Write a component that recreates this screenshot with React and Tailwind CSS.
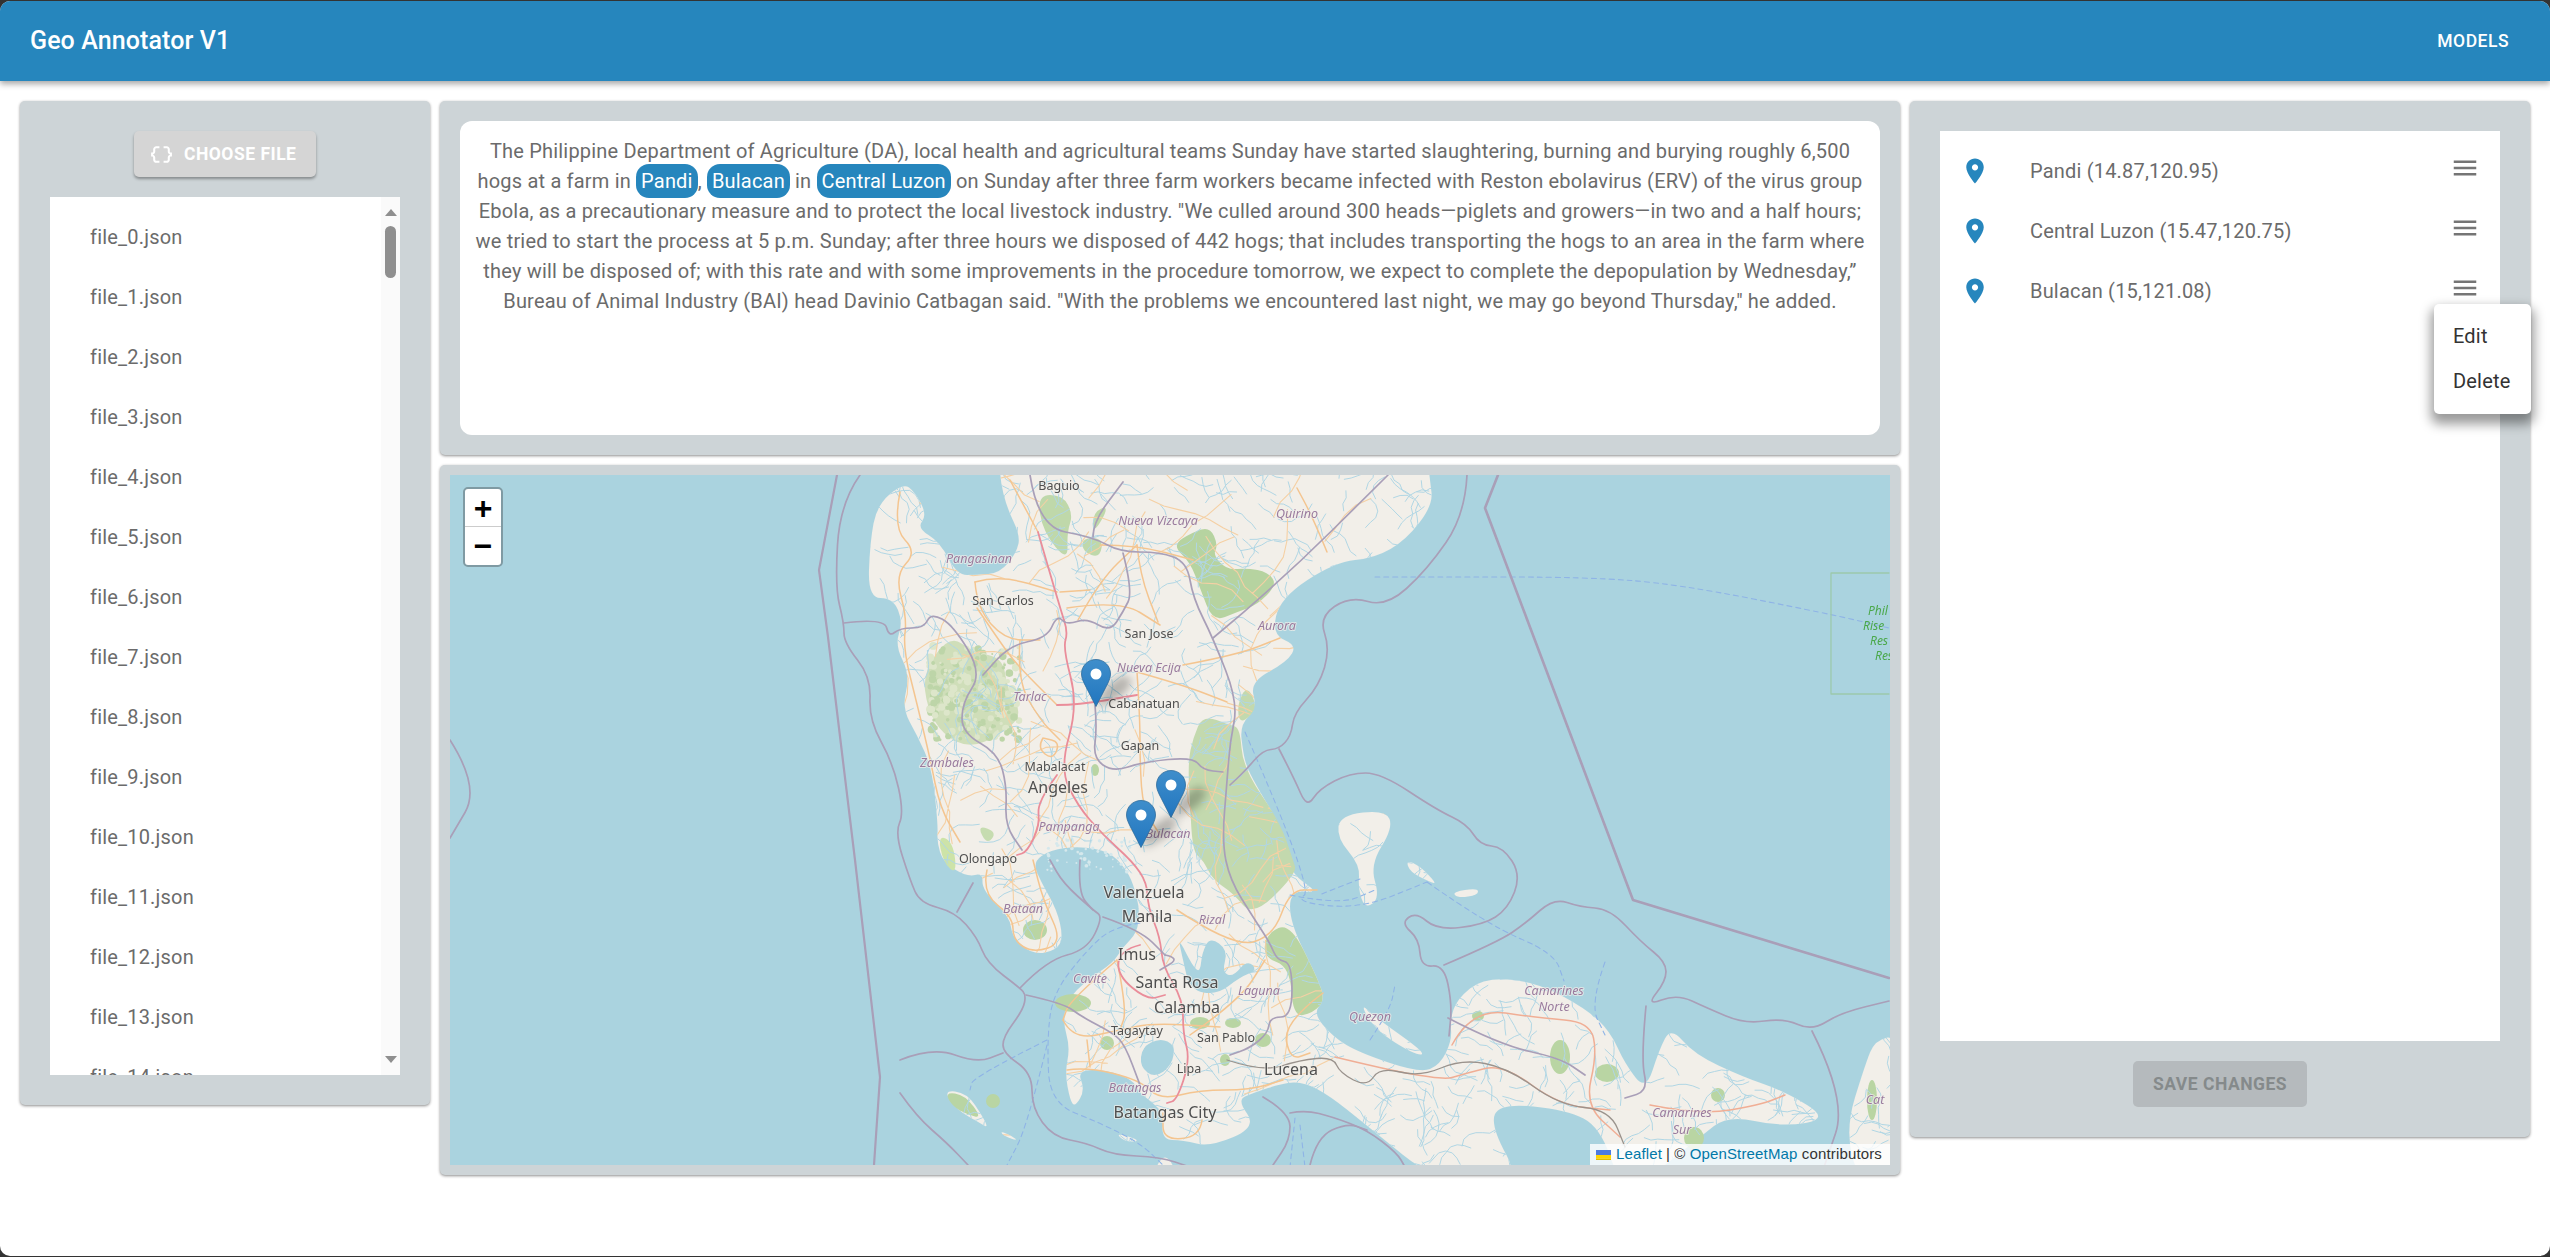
import { useMemo } from "react";

const FILES = Array.from({ length: 15 }, (_, i) => `file_${i}.json`);

const LOCATIONS = ["Pandi (14.87,120.95)", "Central Luzon (15.47,120.75)", "Bulacan (15,121.08)"];

const SEA = "#aad3df";
const LAND = "#f2efe9";
const BORDER = "#a99fb8";

const MAIN_LAND = [
  [1000, 455], [1427, 455], [1430, 480], [1433, 505], [1406, 540], [1375, 558], [1335, 562], [1280, 598], [1272, 635],
  [1297, 645], [1287, 662], [1250, 682], [1257, 708], [1240, 725], [1243, 752], [1247, 768], [1260, 792],
  [1280, 825], [1290, 865], [1296, 877], [1319, 893], [1290, 890], [1290, 923], [1317, 977], [1325, 1000],
  [1313, 1013], [1333, 1037], [1360, 1053], [1420, 1073], [1440, 1065], [1452, 1040], [1450, 1020], [1457, 999],
  [1483, 978], [1534, 981], [1585, 1008], [1610, 1031], [1625, 1064], [1646, 1091], [1659, 1050], [1671, 1027],
  [1694, 1054], [1743, 1077], [1784, 1091], [1830, 1119], [1781, 1127], [1728, 1115], [1700, 1137], [1640, 1185],
  [1620, 1185], [1600, 1127], [1567, 1110], [1500, 1103], [1490, 1125], [1523, 1185], [1440, 1185], [1365, 1124],
  [1330, 1096], [1304, 1082], [1283, 1083], [1253, 1093], [1237, 1100], [1257, 1127], [1210, 1147], [1183, 1140],
  [1162, 1140], [1163, 1113], [1153, 1103], [1140, 1093], [1133, 1080], [1107, 1070], [1077, 1070], [1085, 1090],
  [1075, 1107], [1070, 1100], [1065, 1073], [1070, 1047], [1063, 1023], [1067, 1000], [1087, 980], [1113, 963],
  [1123, 947], [1137, 933], [1140, 910], [1133, 883], [1125, 868], [1110, 852], [1080, 846], [1050, 850],
  [1033, 862], [1040, 880], [1057, 910], [1063, 937], [1057, 950], [1033, 955], [1012, 937], [1010, 917],
  [982, 890], [983, 873], [967, 877], [943, 862], [937, 842], [938, 825], [932, 768], [917, 735],
  [902, 708], [910, 675], [895, 645], [903, 622], [893, 598], [868, 598], [870, 542], [877, 505],
  [903, 483], [915, 492], [927, 515], [917, 528], [940, 542], [957, 575], [977, 575], [1000, 573],
  [1017, 552], [1020, 535], [1007, 508], [1000, 480],
];

const ISLANDS = [
  [[1340, 815], [1386, 810], [1393, 828], [1370, 865], [1380, 898], [1365, 909], [1358, 888], [1360, 865], [1337, 838]],
  [[1406, 860], [1420, 866], [1437, 884], [1430, 882], [1410, 872]],
  [[1452, 892], [1478, 888], [1478, 895], [1458, 898]],
  [[1360, 1003], [1375, 1017], [1427, 1054], [1415, 1055], [1375, 1030]],
  [[943, 1090], [967, 1093], [983, 1117], [988, 1128], [980, 1123], [957, 1110]],
  [[1900, 1035], [1875, 1040], [1865, 1065], [1845, 1130], [1860, 1185], [1900, 1185]],
  [[1150, 1180], [1165, 1150], [1180, 1180]],
  [[1116, 1134], [1128, 1136], [1140, 1141], [1126, 1142]],
  [[1000, 1131], [1012, 1136], [1018, 1141], [1004, 1136]],
];

const LAKES = [
  [[1178, 937], [1183, 960], [1190, 990], [1217, 995], [1240, 977], [1258, 970], [1247, 960], [1233, 977], [1222, 972], [1228, 950], [1210, 937], [1202, 953], [1200, 973], [1192, 965]],
  [[1140, 1067], [1142, 1047], [1160, 1038], [1175, 1045], [1172, 1065], [1155, 1078]],
];

const FORESTS = [
  { color: "#b6d3a0", pts: [[1172, 545], [1193, 532], [1210, 527], [1218, 545], [1213, 555], [1227, 570], [1247, 568], [1268, 572], [1277, 585], [1257, 605], [1237, 612], [1213, 622], [1200, 588], [1190, 562]] },
  { color: "#c3d9ae", pts: [[1203, 715], [1230, 725], [1240, 728], [1243, 768], [1280, 822], [1293, 860], [1297, 873], [1253, 917], [1233, 893], [1213, 880], [1203, 860], [1193, 852], [1190, 808], [1188, 762], [1193, 738]] },
  { color: "#c3d9ae", pts: [[1247, 685], [1258, 708], [1240, 725], [1237, 705]] },
  { color: "#b9d5a3", pts: [[1267, 933], [1290, 923], [1317, 977], [1325, 1000], [1313, 1013], [1293, 1017], [1290, 967], [1263, 957]] },
  { color: "#cfdeb9", pts: [[950, 635], [973, 652], [1003, 658], [1007, 688], [1023, 715], [1000, 735], [970, 748], [943, 735], [927, 708], [923, 672]] },
  { color: "#bfd8aa", pts: [[1037, 495], [1063, 495], [1073, 515], [1067, 532], [1068, 562], [1043, 532]] },
  { color: "#bfd8aa", pts: [[1082, 538], [1103, 538], [1100, 558], [1083, 552]] },
  { color: "#bfd8aa", pts: [[1093, 512], [1110, 505], [1093, 535]] },
  { color: "#cde3a8", pts: [[938, 835], [953, 842], [957, 875], [943, 862]] },
  { color: "#c6dcb0", pts: [[977, 825], [997, 832], [987, 845]] },
  { color: "#b9d5a3", pts: [[945, 1092], [965, 1095], [982, 1118], [968, 1115], [952, 1106]] },
];

const PARKS = [
  [1035, 930, 12, 10], [1073, 1003, 18, 9], [1107, 1043, 7, 7], [1200, 1023, 10, 6], [1263, 1040, 8, 7],
  [993, 1101, 7, 7], [1233, 1023, 8, 5], [1560, 1057, 10, 17], [1607, 1073, 12, 9], [1718, 1095, 7, 7],
  [1694, 1138, 10, 11], [1225, 1060, 5, 6], [1478, 1016, 6, 5], [1095, 770, 4, 6], [1872, 1100, 5, 20],
];

// province and sea borders
const BORDERS = [
  [[450, 740], [480, 787], [450, 838]],
  [[860, 475], [840, 503], [835, 587], [844, 623], [844, 643], [871, 677], [869, 720], [893, 763], [904, 813], [895, 833], [910, 880], [920, 903], [955, 912], [977, 937], [987, 963], [1020, 988], [1026, 995], [1023, 1010], [1003, 1037], [1003, 1053], [1032, 1073], [1032, 1108], [1053, 1137], [1087, 1143], [1113, 1155], [1160, 1157], [1190, 1167]],
  [[1026, 995], [1063, 1003], [1082, 1017], [1113, 1033], [1125, 1045], [1140, 1085]],
  [[844, 623], [884, 618], [889, 637], [900, 628], [924, 628], [931, 613], [953, 625], [982, 673], [962, 703], [962, 733], [998, 753], [1007, 787], [1005, 825], [1022, 850]],
  [[1030, 475], [1038, 527], [1093, 537], [1120, 552], [1160, 552], [1187, 562], [1193, 598], [1213, 638], [1238, 702], [1230, 742], [1227, 782], [1222, 842], [1230, 880], [1253, 917], [1270, 943], [1277, 960], [1292, 963], [1292, 1017], [1270, 1017], [1268, 1033], [1250, 1048], [1230, 1055]],
  [[1213, 638], [1277, 585], [1388, 475]],
  [[1123, 553], [1133, 592], [1123, 612], [1110, 632], [1087, 618], [1067, 625], [1057, 615], [1047, 638], [1010, 645], [983, 675]],
  [[1095, 705], [1097, 728], [1093, 758], [1113, 772], [1143, 762], [1193, 757], [1203, 770], [1223, 772]],
  [[1093, 537], [1093, 522], [1123, 482]],
  [[1467, 475], [1465, 515], [1427, 570], [1386, 607], [1350, 596], [1319, 617], [1330, 649], [1319, 686], [1294, 713], [1291, 736], [1279, 749], [1263, 750], [1245, 771], [1230, 785]],
  [[1279, 749], [1294, 778], [1307, 808], [1319, 789], [1350, 773], [1381, 773], [1437, 810], [1467, 824], [1480, 845], [1503, 847], [1521, 875], [1508, 909], [1483, 925], [1437, 930], [1416, 912], [1401, 923], [1419, 939], [1421, 967], [1444, 965], [1452, 1004], [1449, 1036]],
  [[1444, 965], [1498, 942], [1526, 923], [1554, 898], [1580, 907], [1610, 909], [1641, 942], [1666, 962], [1666, 981], [1646, 1006], [1677, 994], [1707, 1008], [1745, 1024], [1784, 1018], [1812, 1031], [1840, 1013], [1889, 1001]],
  [[1646, 1006], [1641, 1059], [1648, 1091], [1625, 1098]],
  [[1812, 1031], [1847, 1100], [1824, 1167]],
  [[1263, 1097], [1290, 1113], [1290, 1140], [1273, 1165]],
  [[1290, 1113], [1305, 1110], [1333, 1117], [1367, 1130], [1397, 1153], [1405, 1167]],
  [[1310, 1165], [1317, 1137], [1347, 1123], [1367, 1130]],
  [[900, 1060], [933, 1047], [977, 1063], [1003, 1053]],
  [[900, 1093], [917, 1117], [947, 1143], [968, 1165]],
  [[957, 912], [973, 883]],
  [[1020, 988], [1047, 960], [1087, 950], [1103, 917], [1093, 910], [1063, 883], [1050, 860]],
  [[1080, 860], [1078, 893], [1093, 910]],
  [[1103, 917], [1140, 930], [1165, 955]],
  [[1165, 955], [1180, 958], [1160, 970]],
  [[1448, 1018], [1500, 1045], [1560, 1058], [1585, 1075]],
];

const FERRY_LINES = [
  [[1375, 577], [1432, 577], [1585, 577], [1677, 584], [1830, 614], [1889, 628]],
  [[1245, 732], [1314, 889], [1294, 902], [1360, 909], [1427, 882]],
  [[1360, 879], [1319, 895]],
  [[1427, 882], [1488, 925], [1554, 953], [1564, 981]],
  [[1605, 962], [1590, 1004], [1605, 1035]],
  [[1140, 923], [1113, 927], [1087, 950], [1053, 993], [1047, 1040], [1050, 1103], [1100, 1123], [1140, 1143], [1163, 1165]],
  [[1047, 1040], [973, 1077], [970, 1090]],
  [[1047, 1045], [1027, 1127], [1007, 1165]],
  [[1290, 895], [1340, 905], [1375, 890]],
  [[1300, 1125], [1305, 1167]],
  [[1295, 1118], [1290, 1167]],
  [[1370, 1040], [1390, 1010], [1395, 985]],
];

const PINK_ROADS = [
  [[1038, 532], [1060, 608], [1068, 632], [1063, 648], [1078, 705], [1060, 768], [1077, 805], [1103, 835], [1133, 862], [1147, 883], [1148, 907], [1160, 937], [1163, 967], [1183, 1000], [1183, 1033], [1190, 1060], [1177, 1100], [1167, 1103]],
  [[1057, 705], [1078, 705], [1137, 695]],
  [[1057, 775], [1037, 802], [1040, 825], [1027, 852], [1017, 855]],
  [[1140, 945], [1120, 950], [1117, 975], [1147, 1000], [1165, 995]],
];

const ORANGE_ROADS = [
  [[900, 492], [893, 528], [917, 552], [895, 575], [907, 618], [903, 648], [918, 708], [930, 758], [940, 808], [960, 842]],
  [[975, 582], [1000, 575], [1057, 592]],
  [[977, 608], [1000, 642], [1017, 665], [1057, 705]],
  [[975, 582], [977, 608], [1005, 640], [1040, 640]],
  [[1067, 608], [1120, 600], [1160, 625]],
  [[1137, 545], [1140, 575], [1158, 622]],
  [[1137, 672], [1140, 718], [1140, 765], [1143, 808], [1160, 835]],
  [[1183, 665], [1237, 655], [1280, 638]],
  [[1137, 672], [1183, 685], [1227, 702]],
  [[1327, 552], [1313, 518], [1297, 488]],
  [[1100, 545], [1137, 545], [1193, 560]],
  [[1043, 738], [1037, 748], [1053, 760], [1060, 742], [1043, 738]],
  [[987, 870], [982, 893], [1013, 917], [1013, 940], [1033, 953], [1063, 943], [1043, 900], [1033, 860]],
  [[1177, 910], [1233, 947], [1273, 937], [1290, 890], [1317, 890]],
  [[1323, 993], [1283, 1023], [1290, 1060], [1310, 1053]],
  [[1067, 1070], [1087, 1067], [1140, 1080], [1160, 1100], [1200, 1090], [1250, 1090], [1283, 1080]],
  [[1063, 1020], [1073, 1040], [1120, 1030], [1153, 1023], [1220, 1027]],
  [[1117, 960], [1127, 1010], [1120, 1030]],
  [[1087, 1040], [1090, 1067]],
  [[1202, 1120], [1200, 1137], [1163, 1140], [1163, 1113]],
  [[1117, 960], [1070, 1000], [1063, 1020]],
  [[1190, 1035], [1240, 1000], [1265, 960]],
  [[1038, 532], [1010, 480]],
  [[1078, 620], [1100, 580], [1137, 545]],
  [[1020, 640], [1017, 680], [1040, 720], [1060, 740]],
  [[1090, 590], [1060, 592]],
];

const SALMON_ROADS = [
  [[1452, 1045], [1472, 1008], [1539, 1018], [1590, 1022], [1597, 1054], [1585, 1105], [1620, 1137]],
  [[1335, 1057], [1437, 1082], [1467, 1073], [1503, 1064], [1559, 1105], [1610, 1110]],
  [[1650, 1105], [1700, 1115], [1760, 1105], [1785, 1095]],
];

const RAIL = [
  [1227, 1060], [1263, 1072], [1300, 1060], [1333, 1057], [1340, 1073], [1367, 1087], [1380, 1067], [1420, 1077], [1462, 1059], [1508, 1068], [1559, 1105], [1610, 1110], [1625, 1147],
];

const CITY_LABELS = [
  ["Baguio", 1059, 490, 12.5], ["San Carlos", 1003, 605, 12.5], ["San Jose", 1149, 638, 12.5], ["Cabanatuan", 1144, 708, 12.5],
  ["Gapan", 1140, 750, 12.5], ["Mabalacat", 1055, 771, 12.5], ["Angeles", 1058, 793, 16], ["Olongapo", 988, 863, 12.5],
  ["Valenzuela", 1144, 898, 16], ["Manila", 1147, 922, 16], ["Imus", 1137, 960, 16], ["Santa Rosa", 1177, 988, 16],
  ["Calamba", 1187, 1013, 16], ["Tagaytay", 1137, 1035, 12.5], ["San Pablo", 1226, 1042, 12.5], ["Lipa", 1189, 1073, 12.5],
  ["Lucena", 1291, 1075, 16], ["Batangas City", 1165, 1118, 16],
];

const REGION_LABELS = [
  ["Pangasinan", 979, 563], ["Nueva Vizcaya", 1158, 525], ["Quirino", 1297, 518], ["Aurora", 1277, 630],
  ["Nueva Ecija", 1149, 672], ["Tarlac", 1030, 701], ["Zambales", 947, 767], ["Pampanga", 1069, 831],
  ["Bulacan", 1168, 838], ["Bataan", 1023, 913], ["Rizal", 1212, 924], ["Cavite", 1090, 983],
  ["Laguna", 1259, 995], ["Batangas", 1135, 1092], ["Quezon", 1370, 1021], ["Camarines", 1554, 995],
  ["Norte", 1554, 1011], ["Camarines", 1682, 1117], ["Sur", 1682, 1134], ["Cat", 1875, 1104],
];

const RESERVE_LABELS = [
  ["Phil", 1868, 615], ["Rise", 1863, 630], ["Res", 1870, 645], ["Res", 1875, 660],
];

// rounded line through the traced points
function smooth(pts, closed = false) {
  if (closed) {
    const mid = (a, b) => [(a[0] + b[0]) / 2, (a[1] + b[1]) / 2];
    const start = mid(pts[pts.length - 1], pts[0]);
    let d = `M${start[0]} ${start[1]}`;
    pts.forEach((p, i) => {
      const m = mid(p, pts[(i + 1) % pts.length]);
      d += `Q${p[0]} ${p[1]} ${m[0]} ${m[1]}`;
    });
    return d + "Z";
  }
  let d = `M${pts[0][0]} ${pts[0][1]}`;
  for (let i = 1; i < pts.length - 1; i++) {
    const mx = (pts[i][0] + pts[i + 1][0]) / 2;
    const my = (pts[i][1] + pts[i + 1][1]) / 2;
    d += `Q${pts[i][0]} ${pts[i][1]} ${mx} ${my}`;
  }
  const last = pts[pts.length - 1];
  return d + `L${last[0]} ${last[1]}`;
}

// wandering strokes for streams and minor roads, seeded so the picture stays the same
function scatter({ seed, count, x0, x1, y0, y1, step, bend, minSteps, maxSteps }) {
  let s = seed;
  const rnd = () => {
    s = (s * 1664525 + 1013904223) % 4294967296;
    return s / 4294967296;
  };
  let d = "";
  for (let i = 0; i < count; i++) {
    let x = x0 + rnd() * (x1 - x0);
    let y = y0 + rnd() * (y1 - y0);
    let a = rnd() * Math.PI * 2;
    d += `M${x.toFixed(1)} ${y.toFixed(1)}`;
    const steps = minSteps + Math.floor(rnd() * (maxSteps - minSteps + 1));
    for (let k = 0; k < steps; k++) {
      a += (rnd() - 0.5) * bend;
      x += Math.cos(a) * step;
      y += Math.sin(a) * step;
      d += `L${x.toFixed(1)} ${y.toFixed(1)}`;
    }
  }
  return d;
}

// blotches that break up the flat forest areas
function blotches(seed, count, x0, x1, y0, y1) {
  let s = seed;
  const rnd = () => {
    s = (s * 1664525 + 1013904223) % 4294967296;
    return s / 4294967296;
  };
  return Array.from({ length: count }, () => ({
    cx: x0 + rnd() * (x1 - x0),
    cy: y0 + rnd() * (y1 - y0),
    r: 1 + rnd() * 3,
  }));
}

function BaseMap() {
  const rivers = useMemo(() => scatter({ seed: 41, count: 2000, x0: 860, x1: 1890, y0: 475, y1: 1165, step: 7, bend: 1.3, minSteps: 3, maxSteps: 6 }), []);
  const lanes = useMemo(() => scatter({ seed: 7, count: 110, x0: 890, x1: 1340, y0: 480, y1: 1130, step: 16, bend: 0.9, minSteps: 3, maxSteps: 6 }), []);
  const mottled = useMemo(() => blotches(11, 260, 928, 1020, 645, 740), []);
  const marsh = useMemo(() => blotches(23, 70, 1045, 1130, 838, 872), []);
  const landPath = smooth(MAIN_LAND, true);
  const islandPaths = ISLANDS.map((pts) => smooth(pts, true));

  return (
    <svg viewBox="450 475 1440 690" className="block w-full h-full" fill="none" strokeLinejoin="round" strokeLinecap="round">
      <defs>
        <filter id="tile" x="0" y="0" width="100%" height="100%">
          <feGaussianBlur stdDeviation="0.5" />
        </filter>
        <filter id="tileText" x="-5%" y="-20%" width="110%" height="140%">
          <feGaussianBlur stdDeviation="0.3" />
        </filter>
        <clipPath id="landClip">
          <path d={landPath} />
          {islandPaths.map((d, i) => (
            <path key={i} d={d} />
          ))}
        </clipPath>
      </defs>
      <rect x="450" y="475" width="1440" height="690" fill={SEA} />
      <g filter="url(#tile)">
        <path d={landPath} fill={LAND} />
        {islandPaths.map((d, i) => (
          <path key={i} d={d} fill={LAND} />
        ))}
        {marsh.map((b, i) => (
          <circle key={i} cx={b.cx} cy={b.cy} r={b.r * 0.5} fill="#d5e8ec" />
        ))}
        {FORESTS.map((f, i) => (
          <path key={i} d={smooth(f.pts, true)} fill={f.color} />
        ))}
        {mottled.map((b, i) => (
          <circle key={i} cx={b.cx} cy={b.cy} r={b.r} fill={i % 2 ? "#bdd5a8" : "#dde6ca"} />
        ))}
        {PARKS.map(([cx, cy, rx, ry], i) => (
          <ellipse key={i} cx={cx} cy={cy} rx={rx} ry={ry} fill="#b9d5a3" />
        ))}
        <g clipPath="url(#landClip)">
          <path d={rivers} stroke="#b0d6e4" strokeWidth="1" />
          <path d={lanes} stroke="#f5d0a4" strokeWidth="1.1" />
        </g>
        {LAKES.map((pts, i) => (
          <path key={i} d={smooth(pts, true)} fill={SEA} />
        ))}
        {ORANGE_ROADS.map((pts, i) => (
          <path key={i} d={smooth(pts)} stroke="#f4c590" strokeWidth="1.5" />
        ))}
        {SALMON_ROADS.map((pts, i) => (
          <path key={i} d={smooth(pts)} stroke="#f0ae95" strokeWidth="1.5" />
        ))}
        {PINK_ROADS.map((pts, i) => (
          <path key={i} d={smooth(pts)} stroke="#ea8d9a" strokeWidth="1.8" />
        ))}
        <path d={smooth(RAIL)} stroke="#9a938d" strokeWidth="1.3" />
        {FERRY_LINES.map((pts, i) => (
          <path key={i} d={smooth(pts)} stroke="#8fb4e6" strokeWidth="1.1" strokeDasharray="5 4" />
        ))}
        {BORDERS.map((pts, i) => (
          <path key={i} d={smooth(pts)} stroke={BORDER} strokeWidth="1.7" />
        ))}
        <path d="M837 475 819 570 828 637 842 753 855 860 880 1077 874 1165" stroke={BORDER} strokeWidth="2.2" />
        <path d="M1498 475 1485 508 1633 900 1889 978" stroke={BORDER} strokeWidth="2.6" />
        <path d="M1889 573H1831V694H1889" stroke="#9cc9ac" strokeWidth="1.3" />
      </g>
      <g filter="url(#tileText)" className="font-['Noto_Sans',sans-serif]" paintOrder="stroke" strokeWidth="2">
        {REGION_LABELS.map(([t, x, y], i) => (
          <text key={i} x={x} y={y} textAnchor="middle" fontSize="12.5" fontStyle="italic" fill="#9a7b9e" stroke={LAND} strokeOpacity="0.7">
            {t}
          </text>
        ))}
        {CITY_LABELS.map(([t, x, y, s], i) => (
          <text key={i} x={x} y={y} textAnchor="middle" fontSize={s} fill="#4f4f4f" stroke={LAND} strokeOpacity="0.7">
            {t}
          </text>
        ))}
        {RESERVE_LABELS.map(([t, x, y], i) => (
          <text key={i} x={x} y={y} fontSize="12" fontStyle="italic" fill="#4aa84a">
            {t}
          </text>
        ))}
      </g>
    </svg>
  );
}

function Marker({ className }) {
  return (
    <svg viewBox="0 0 70 50" className={`absolute w-[70px] h-[50px] overflow-visible ${className}`}>
      <defs>
        <linearGradient id="pinFill" x1="0" y1="0" x2="0" y2="1">
          <stop offset="0" stopColor="#3f8ecb" />
          <stop offset="1" stopColor="#2176bf" />
        </linearGradient>
        <filter id="pinShadow" x="-60%" y="-60%" width="220%" height="220%">
          <feGaussianBlur stdDeviation="4" />
        </filter>
      </defs>
      <path d="M15 47 24 28 42 16 52 22 42 36 24 46Z" fill="#000" fillOpacity="0.25" filter="url(#pinShadow)" />
      <path
        d="M15 .5C6.9.5.5 6.9.5 15c0 3.2 1.300 6.200 2.500 8.900L15 47.500l12-23.600c1.200-2.700 2.500-5.700 2.500-8.900C29.500 6.900 23.100.5 15 .5Z"
        fill="url(#pinFill)"
        stroke="#2e6c9c"
        strokeWidth="0.8"
      />
      <circle cx="15" cy="15" r="5.500" fill="#fff" />
    </svg>
  );
}

function Panel({ className, children }) {
  return (
    <div className={`bg-[#cdd4d7] rounded-[5px] shadow-[0_1px_3px_rgba(0,0,0,0.45)] ${className}`}>{children}</div>
  );
}

function Scrollbar() {
  return (
    <div className="w-[19px] shrink-0 bg-[#fafafa] flex flex-col items-center pt-[12px] pb-[12px]">
      <div className="w-0 h-0 border-x-[6.5px] border-x-transparent border-b-[7px] border-b-[#8f8f8f]" />
      <div className="w-[11px] h-[52px] mt-[10px] rounded-[6px] bg-[#8f8f8f]" />
      <div className="flex-1" />
      <div className="w-0 h-0 border-x-[6.5px] border-x-transparent border-t-[7px] border-t-[#8f8f8f]" />
    </div>
  );
}

export default function App() {
  return (
    <div className="h-[1257px] bg-[#333333] py-px font-['Roboto',sans-serif]">
      <div className="h-full rounded-[10px] bg-white overflow-hidden">
        <header className="h-[80px] bg-[#2686bd] flex items-center justify-between pl-[30px] pr-[41px] text-white shadow-[0_3px_6px_rgba(0,0,0,0.35)] relative">
          <h1 className="text-[25px] font-medium tracking-[0.1px]">Geo Annotator V1</h1>
          <span className="text-[17.5px] font-medium tracking-[0.5px]">MODELS</span>
        </header>

        <main className="flex gap-[10px] px-[20px] pt-[20px] items-start">
          <Panel className="w-[410px] h-[1004px] shrink-0 px-[30px] pt-[30px] flex flex-col items-center">
            <button className="w-[182px] h-[46px] shrink-0 flex items-center gap-[10px] pl-[15px] rounded-[5px] bg-[#d5d5d5] text-white text-[17.5px] font-bold tracking-[0.5px] shadow-[0_2px_3px_rgba(0,0,0,0.35)]">
              <svg viewBox="0 0 24 24" className="w-[25px] h-[25px] fill-current">
                <path d="M4 7v2c0 .55-.45 1-1 1H2v4h1c.55 0 1 .45 1 1v2c0 1.65 1.35 3 3 3h3v-2H7c-.55 0-1-.45-1-1v-2c0-1.3-.84-2.42-2-2.83v-.34C5.160 11.420 6 10.300 6 9V7c0-.55.45-1 1-1h3V4H7C5.350 4 4 5.350 4 7zm17 3c-.55 0-1-.45-1-1V7c0-1.650-1.350-3-3-3h-3v2h3c.55 0 1 .45 1 1v2c0 1.300.84 2.420 2 2.830v.34c-1.160.41-2 1.520-2 2.830v2c0 .55-.45 1-1 1h-3v2h3c1.650 0 3-1.350 3-3v-2c0-.55.45-1 1-1h1v-4h-1z" />
              </svg>
              CHOOSE FILE
            </button>
            <div className="mt-[20px] w-[350px] h-[878px] bg-white flex overflow-hidden">
              <ul className="flex-1 pt-[10px] text-[20px] tracking-[0.19px] text-[#6b6b6b]">
                {FILES.map((name) => (
                  <li key={name} className="h-[60px] flex items-center pl-[40px]">
                    {name}
                  </li>
                ))}
              </ul>
              <Scrollbar />
            </div>
          </Panel>

          <div className="flex-1 flex flex-col gap-[10px]">
            <Panel className="h-[354px] p-[20px]">
              <div className="h-full bg-white rounded-[12px] pt-[15px] px-[10px] text-center text-[20px] leading-[30px] tracking-[0.19px] text-[#6b6b6b]">
                The Philippine Department of Agriculture (DA), local health and agricultural teams Sunday have started slaughtering, burning and burying roughly 6,500 hogs at a farm in{" "}
                <span className="bg-[#2686bd] text-white rounded-[13px] px-[5px] py-[5px]">Pandi</span>,{" "}
                <span className="bg-[#2686bd] text-white rounded-[13px] px-[5px] py-[5px]">Bulacan</span> in{" "}
                <span className="bg-[#2686bd] text-white rounded-[13px] px-[5px] py-[5px]">Central Luzon</span> on Sunday after three farm workers became infected with Reston ebolavirus (ERV) of the virus group Ebola, as a precautionary measure and to protect the local livestock industry. "We culled around 300 heads—piglets and growers—in two and a half hours; we tried to start the process at 5 p.m. Sunday; after three hours we disposed of 442 hogs; that includes transporting the hogs to an area in the farm where they will be disposed of; with this rate and with some improvements in the procedure tomorrow, we expect to complete the depopulation by Wednesday,” Bureau of Animal Industry (BAI) head Davinio Catbagan said. "With the problems we encountered last night, we may go beyond Thursday," he added.
              </div>
            </Panel>

            <Panel className="h-[710px] p-[10px]">
              <div className="relative h-[690px] overflow-hidden">
                <BaseMap />
                <Marker className="left-[631px] top-[184px]" />
                <Marker className="left-[706px] top-[295px]" />
                <Marker className="left-[676px] top-[325px]" />

                <div className="absolute left-[13px] top-[12px] w-[40px] rounded-[5px] border-[2px] border-[#7f9aa3] bg-white text-black font-bold font-['Liberation_Sans',sans-serif]">
                  <div className="h-[38px] flex items-center justify-center text-[32px] leading-none border-b border-[#cccccc]">+</div>
                  <div className="h-[38px] flex items-center justify-center text-[32px] leading-none">−</div>
                </div>

                <div className="absolute right-0 bottom-0 h-[21px] w-[300px] bg-white/80 flex items-center pl-[6px] text-[15px] tracking-[0.15px] text-[#333333] whitespace-nowrap font-['Liberation_Sans',sans-serif]">
                  <svg viewBox="0 0 12 8" className="w-[15px] h-[10px] mr-[5px]">
                    <path fill="#4c7be1" d="M0 0h12v4H0z" />
                    <path fill="#ffd500" d="M0 4h12v3H0z" />
                    <path fill="#e0bc00" d="M0 7h12v1H0z" />
                  </svg>
                  <span className="text-[#0078a8]">Leaflet</span>
                  <span className="mx-[4px]">|</span>
                  <span>©&nbsp;</span>
                  <span className="text-[#0078a8]">OpenStreetMap</span>
                  <span>&nbsp;contributors</span>
                </div>
              </div>
            </Panel>
          </div>

          <Panel className="relative w-[620px] h-[1036px] shrink-0 px-[30px] pt-[30px] flex flex-col items-center">
            <ul className="w-[560px] h-[910px] shrink-0 bg-white pt-[10px] text-[20px] tracking-[0.19px] text-[#6b6b6b]">
              {LOCATIONS.map((loc) => (
                <li key={loc} className="h-[60px] flex items-center pl-[20px] pr-[19px]">
                  <svg viewBox="0 0 24 24" className="w-[30px] h-[30px] mr-[40px] fill-[#2686bd]">
                    <path d="M12 2C8.130 2 5 5.130 5 9c0 5.250 7 13 7 13s7-7.750 7-13c0-3.870-3.130-7-7-7zm0 9.500c-1.380 0-2.500-1.120-2.500-2.500s1.120-2.500 2.500-2.500 2.500 1.120 2.500 2.500-1.120 2.500-2.500 2.500z" />
                  </svg>
                  <span className="flex-1">{loc}</span>
                  <svg viewBox="0 0 24 24" className="w-[30px] h-[30px] -translate-y-[3px] -translate-x-px fill-[#757575]">
                    <path d="M3 18h18v-2H3v2zm0-5h18v-2H3v2zm0-7v2h18V6H3z" />
                  </svg>
                </li>
              ))}
            </ul>
            <button className="mt-[20px] w-[174px] h-[46px] shrink-0 rounded-[5px] bg-[#b5babd] text-[#858a8b] text-[17.5px] font-bold tracking-[0.5px]">
              SAVE CHANGES
            </button>

            <div className="absolute left-[524px] top-[203px] w-[97px] pt-[9px] pb-[11px] rounded-[5px] bg-white text-[20px] tracking-[0.19px] text-[#333333] shadow-[0_7px_12px_3px_rgba(0,0,0,0.4)]">
              <div className="h-[45px] flex items-center pl-[19px]">Edit</div>
              <div className="h-[45px] flex items-center pl-[19px]">Delete</div>
            </div>
          </Panel>
        </main>
      </div>
    </div>
  );
}
